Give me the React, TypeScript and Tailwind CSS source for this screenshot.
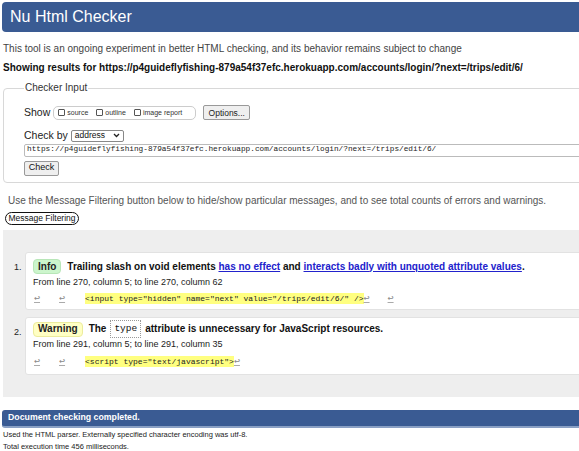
import React from 'react'

const sans = "font-['Liberation_Sans',Arial,sans-serif]"
const mono = "font-['Liberation_Mono','Courier_New',monospace]"

function Ret({ className = '' }: { className?: string }) {
  return <span className={`inline-block text-[10px] leading-none text-[#888] underline decoration-[#aaa] ${className}`}>↩</span>
}

function Badge({ children, tone }: { children: React.ReactNode; tone: 'info' | 'warning' }) {
  const c = tone === 'info' ? 'bg-[#ccf5cc] border-[#b8e6b8]' : 'bg-[#ffffc4] border-[#ecec9c]'
  return (
    <span className={`inline-flex h-[15px] items-center rounded-[4px] border px-[4px] text-[10px] font-bold text-[#222] ${c}`}>
      {children}
    </span>
  )
}

export default function App() {
  return (
    <div className={`h-[451px] w-[579px] overflow-hidden bg-white text-[#222] ${sans}`}>
      <div className="w-[760px] pl-[2px] pt-[2px]">
        {/* header */}
        <div className="flex h-[30px] items-center rounded-l-[4px] bg-[#3a5b93] pl-[8px] text-[16px] text-white">
          Nu Html Checker
        </div>

        <p className="mt-[11px] pl-[1px] text-[10px] leading-[12px] text-[#444]">
          This tool is an ongoing experiment in better HTML checking, and its behavior remains subject to change
        </p>
        <p className="mt-[7px] pl-[1px] text-[10px] font-bold leading-[12px] text-[#111]">
          Showing results for https://p4guideflyfishing-879a54f37efc.herokuapp.com/accounts/login/?next=/trips/edit/6/
        </p>

        {/* checker input */}
        <fieldset className="ml-[1px] mt-[8px] h-[101px] rounded-[4px] border border-[#d8d8d8] pl-[20px]">
          <legend className="px-[1px] text-[10px] leading-[12px] text-[#333]">Checker Input</legend>
          <div className="mt-[11px] flex items-center">
            <span className="text-[10.5px] text-[#222]">Show</span>
            <div className="ml-[3px] flex h-[14px] w-[143px] items-center gap-[8px] rounded-[5px] border border-[#ccc] pl-[4px] text-[7px] text-[#333]">
              <span className="flex items-center gap-[2px]">
                <span className="inline-block h-[7px] w-[7px] rounded-[1px] border border-[#555]" />source
              </span>
              <span className="flex items-center gap-[2px]">
                <span className="inline-block h-[7px] w-[7px] rounded-[1px] border border-[#555]" />outline
              </span>
              <span className="flex items-center gap-[2px]">
                <span className="inline-block h-[7px] w-[7px] rounded-[1px] border border-[#555]" />image report
              </span>
            </div>
            <span className="ml-[7px] flex h-[15px] w-[47px] items-center justify-center rounded-[2px] border border-[#999] bg-[#efefef] text-[8.5px] text-[#222]">
              Options...
            </span>
          </div>
          <div className="mt-[7px] flex items-center">
            <span className="text-[10.5px] text-[#222]">Check by</span>
            <span className="ml-[3px] flex h-[12px] w-[53px] items-center justify-between rounded-[2px] border border-[#888] px-[3px] text-[8.5px] text-[#111]">
              address
              <svg width="7" height="5" viewBox="0 0 7 5"><path d="M1 1l2.5 2.5L6 1" stroke="#222" strokeWidth="1.3" fill="none" /></svg>
            </span>
          </div>
          <div className={`flex h-[13px] items-center rounded-[2px] border border-[#bbb] pl-[2px] text-[7.75px] text-[#222] ${mono}`}>
            https://p4guideflyfishing-879a54f37efc.herokuapp.com/accounts/login/?next=/trips/edit/6/
          </div>
          <span className="mt-[4px] flex h-[15px] w-[35px] items-center justify-center rounded-[2px] border border-[#999] bg-[#efefef] text-[9px] text-[#111]">
            Check
          </span>
        </fieldset>

        <p className="mt-[12px] pl-[6px] text-[10px] leading-[12px] text-[#555]">
          Use the Message Filtering button below to hide/show particular messages, and to see total counts of errors and warnings.
        </p>
        <span className="ml-[3px] mt-[5px] flex h-[13px] w-[74px] items-center justify-center rounded-full border border-[#111] text-[8.5px] text-[#111]">
          Message Filtering
        </span>

        {/* messages */}
        <div className="ml-[1px] mt-[5px] bg-[#eeeeee] pb-[22px] pt-[22px]">
          <ol className="flex flex-col gap-[7px]">
            <li className="flex">
              <span className="w-[22px] pt-[10px] pl-[11px] text-[9px] leading-[10px] text-[#222]">1.</span>
              <div className="h-[58px] flex-1 rounded-l-[3px] border border-[#e2e2e2] bg-white pl-[7px] pt-[6px]">
                <div className="flex items-center text-[10px] font-bold leading-[14px] text-[#111]">
                  <Badge tone="info">Info</Badge>
                  <span className="ml-[6px]">
                    Trailing slash on void elements{' '}
                    <a className="text-[#2222cc] underline">has no effect</a> and{' '}
                    <a className="text-[#2222cc] underline">interacts badly with unquoted attribute values</a>.
                  </span>
                </div>
                <div className="mt-[3px] text-[9px] leading-[11px] text-[#222]">From line 270, column 5; to line 270, column 62</div>
                <div className={`mt-[5px] flex items-center text-[8px] leading-[11px] ${mono}`}>
                  <Ret className="ml-[1px]" />
                  <Ret className="ml-[19px]" />
                  <span className="ml-[20px] bg-[#ffff80] text-[#222]">{'<input type="hidden" name="next" value="/trips/edit/6/" />'}</span>
                  <Ret />
                  <Ret className="ml-[18px]" />
                </div>
              </div>
            </li>
            <li className="flex">
              <span className="w-[22px] pt-[10px] pl-[11px] text-[9px] leading-[10px] text-[#222]">2.</span>
              <div className="h-[58px] flex-1 rounded-l-[3px] border border-[#e2e2e2] bg-white pl-[7px] pt-[2px]">
                <div className="flex items-center text-[10px] font-bold leading-[18px] text-[#111]">
                  <Badge tone="warning">Warning</Badge>
                  <span className="ml-[6px]">The</span>
                  <span className={`ml-[4px] inline-flex h-[18px] items-center border border-dotted border-[#999] px-[3px] text-[9.5px] font-normal ${mono}`}>type</span>
                  <span className="ml-[4px]">attribute is unnecessary for JavaScript resources.</span>
                </div>
                <div className="mt-[1px] text-[9px] leading-[11px] text-[#222]">From line 291, column 5; to line 291, column 35</div>
                <div className={`mt-[6px] flex items-center text-[8px] leading-[11px] ${mono}`}>
                  <Ret className="ml-[1px]" />
                  <Ret className="ml-[19px]" />
                  <span className="ml-[20px] bg-[#ffff80] text-[#222]">{'<script type="text/javascript">'}</span>
                  <Ret />
                </div>
              </div>
            </li>
          </ol>
        </div>

        {/* footer */}
        <div className="mt-[13px] flex h-[18px] items-center rounded-l-[3px] border-b-2 border-[#8aa0c4] bg-[#3a5b93] pl-[6px] text-[8.75px] font-bold text-white">
          Document checking completed.
        </div>
        <p className="mt-[1px] pl-[1px] text-[7.5px] leading-[12px] text-[#222]">
          Used the HTML parser. Externally specified character encoding was utf-8.
        </p>
        <p className="pl-[1px] text-[7.5px] leading-[12px] text-[#222]">Total execution time 456 milliseconds.</p>
      </div>
    </div>
  )
}
